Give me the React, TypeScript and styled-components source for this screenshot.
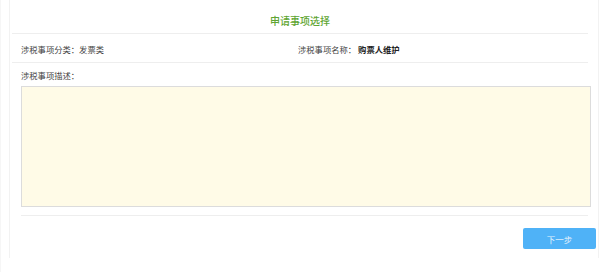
import styled, { createGlobalStyle } from "styled-components";

const GlobalStyle = createGlobalStyle`
    html, body {
        margin: 0;
        padding: 0;
        background: #ffffff;
    }
    body {
        font-family: "Noto Sans CJK SC", "Liberation Sans", sans-serif;
        color: #333333;
    }
`;

type Field = {
    label: string;
    value: string;
    strong?: boolean;
};

const fields: Field[] = [
    { label: "涉税事项分类：", value: "发票类" },
    { label: "涉税事项名称：", value: "购票人维护", strong: true },
];

export default function App() {
    return (
        <>
            <GlobalStyle />
            <Page>
                <Panel>
                    <Header>
                        <Title>申请事项选择</Title>
                    </Header>
                    <InfoRow>
                        {fields.map((f) => (
                            <InfoCell key={f.label}>
                                {f.label}
                                <Value $strong={f.strong}>{f.value}</Value>
                            </InfoCell>
                        ))}
                    </InfoRow>
                    <DescSection>
                        <Label>涉税事项描述：</Label>
                        <Description readOnly />
                    </DescSection>
                    <Footer>
                        <NextButton type="button">下一步</NextButton>
                    </Footer>
                </Panel>
            </Page>
        </>
    );
}

const Page = styled.div`
    width: 600px;
    height: 272px;
    box-sizing: border-box;
    padding: 0 1px 14px 8px;
    border-left: 1px solid #f6f6f6;
`;

const Panel = styled.div`
    height: 258px;
    box-sizing: border-box;
    border-left: 1px solid #f2f2f2;
    border-right: 1px solid #f2f2f2;
    display: flex;
    flex-direction: column;
`;

const Header = styled.div`
    height: 34px;
    margin: 0 10px 0 2px;
    box-sizing: border-box;
    border-bottom: 1px solid #eeeeee;
    display: flex;
    align-items: center;
    justify-content: center;
    padding-top: 8px;
`;

const Title = styled.h1`
    margin: 0;
    font-size: 10px;
    font-weight: 500;
    color: #5ea531;
`;

const InfoRow = styled.div`
    height: 29px;
    margin: 0 10px 0 2px;
    padding-left: 9px;
    box-sizing: border-box;
    border-bottom: 1px solid #eeeeee;
    display: grid;
    grid-template-columns: 277px 1fr;
    align-items: center;
    padding-top: 1px;
`;

const InfoCell = styled.div`
    font-size: 8.3px;
    color: #444444;
    white-space: nowrap;
`;

const Value = styled.span<{ $strong?: boolean }>`
    font-weight: ${(p) => (p.$strong ? 700 : 400)};
    color: ${(p) => (p.$strong ? "#222222" : "#444444")};
    margin-left: ${(p) => (p.$strong ? "2px" : "0")};
`;

const DescSection = styled.div`
    margin: 0 10px 0 11px;
    padding: 7px 0 8px;
    border-bottom: 1px solid #eeeeee;
    display: flex;
    flex-direction: column;
    gap: 5px;
`;

const Label = styled.div`
    font-size: 8.3px;
    line-height: 11px;
    color: #444444;
`;

const Description = styled.textarea`
    display: block;
    width: 570px;
    height: 121px;
    margin: 0;
    box-sizing: border-box;
    background: #fffbe7;
    border: 1px solid #dcdcdc;
    border-radius: 0;
    resize: none;
    outline: none;
`;

const Footer = styled.div`
    display: flex;
    justify-content: flex-end;
    padding: 12px 2px 0 0;
`;

const NextButton = styled.button`
    width: 73px;
    height: 21px;
    border: none;
    border-radius: 2px;
    background: #4fb2f7;
    color: #e6f3fd;
    font-family: "Noto Sans CJK SC", "Liberation Sans", sans-serif;
    font-size: 8.5px;
    cursor: pointer;
    padding: 0;
`;
